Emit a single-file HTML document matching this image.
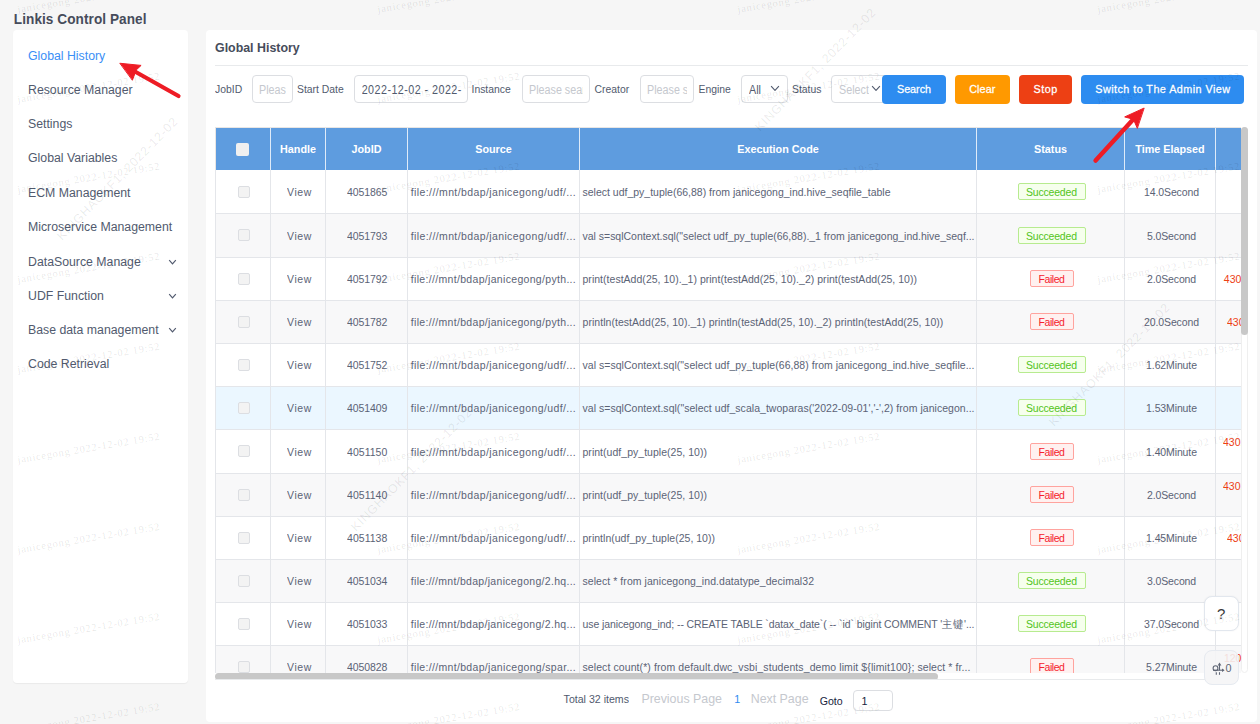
<!DOCTYPE html>
<html><head><meta charset="utf-8"><title>Linkis Control Panel</title>
<style>
html,body{margin:0;padding:0;}
body{width:1260px;height:724px;overflow:hidden;position:relative;background:#f6f6f6;font-family:"Liberation Sans",sans-serif;}
.r{position:absolute;}
.t{position:absolute;line-height:1;white-space:nowrap;transform-origin:0 0.8465em;}
</style></head><body>
<div class="r" style="left:13px;top:30px;width:175px;height:653px;background:#fff;border-radius:4px;box-shadow:0 1px 1px rgba(0,0,0,0.05);"></div>
<div class="t" style="left:13.80px;top:12.69px;font-size:13.6px;color:#464c5b;font-weight:700;transform:scaleY(1.04);letter-spacing:0.066px;">Linkis Control Panel</div>
<div class="t" style="left:28.00px;top:50.29px;font-size:12.3px;color:#3a8ef6;font-weight:400;transform:scaleY(1.08);">Global History</div>
<div class="t" style="left:28.00px;top:84.19px;font-size:12.3px;color:#515a6e;font-weight:400;transform:scaleY(1.08);">Resource Manager</div>
<div class="t" style="left:28.00px;top:118.19px;font-size:12.3px;color:#515a6e;font-weight:400;transform:scaleY(1.08);">Settings</div>
<div class="t" style="left:28.00px;top:152.39px;font-size:12.3px;color:#515a6e;font-weight:400;transform:scaleY(1.08);">Global Variables</div>
<div class="t" style="left:28.00px;top:186.99px;font-size:12.3px;color:#515a6e;font-weight:400;transform:scaleY(1.08);">ECM Management</div>
<div class="t" style="left:28.00px;top:221.39px;font-size:12.3px;color:#515a6e;font-weight:400;transform:scaleY(1.08);">Microservice Management</div>
<div class="t" style="left:28.00px;top:255.69px;font-size:12.3px;color:#515a6e;font-weight:400;transform:scaleY(1.08);">DataSource Manage</div>
<svg class="r" style="left:168.0px;top:258.6px" width="9" height="6" viewBox="0 0 9 6"><path d="M1.2 1.2 L4.5 4.8 L7.8 1.2" fill="none" stroke="#515a6e" stroke-width="1.2"/></svg>
<div class="t" style="left:28.00px;top:289.69px;font-size:12.3px;color:#515a6e;font-weight:400;transform:scaleY(1.08);">UDF Function</div>
<svg class="r" style="left:168.0px;top:292.6px" width="9" height="6" viewBox="0 0 9 6"><path d="M1.2 1.2 L4.5 4.8 L7.8 1.2" fill="none" stroke="#515a6e" stroke-width="1.2"/></svg>
<div class="t" style="left:28.00px;top:323.69px;font-size:12.3px;color:#515a6e;font-weight:400;transform:scaleY(1.08);">Base data management</div>
<svg class="r" style="left:168.0px;top:326.6px" width="9" height="6" viewBox="0 0 9 6"><path d="M1.2 1.2 L4.5 4.8 L7.8 1.2" fill="none" stroke="#515a6e" stroke-width="1.2"/></svg>
<div class="t" style="left:28.00px;top:358.49px;font-size:12.3px;color:#515a6e;font-weight:400;transform:scaleY(1.08);">Code Retrieval</div>
<div class="r" style="left:206px;top:30px;width:1051px;height:692px;background:#fff;border-radius:4px;"></div>
<div class="t" style="left:215.00px;top:42.30px;font-size:12.4px;color:#464c5b;font-weight:700;transform:scaleY(1.08);">Global History</div>
<div class="r" style="left:215px;top:65px;width:1033px;height:1px;background:#e8eaec;"></div>
<div class="t" style="left:215.00px;top:84.70px;font-size:10.4px;color:#515a6e;font-weight:400;transform:scaleY(1.08);">JobID</div>
<div class="r" style="left:252px;top:75px;width:41px;height:28px;border:1px solid #dcdee2;border-radius:4px;box-sizing:border-box;background:#fff;"></div>
<div class="t" style="left:259.00px;top:85.10px;font-size:10.75px;color:#c5c8ce;font-weight:400;transform:scaleY(1.12);width:27px;overflow:hidden;white-space:nowrap;">Please search</div>
<div class="t" style="left:297.00px;top:84.70px;font-size:10.4px;color:#515a6e;font-weight:400;transform:scaleY(1.08);">Start Date</div>
<div class="r" style="left:354px;top:75px;width:114px;height:28px;border:1px solid #dcdee2;border-radius:4px;box-sizing:border-box;background:#fff;"></div>
<div class="t" style="left:361.70px;top:85.10px;font-size:10.75px;color:#515a6e;font-weight:400;transform:scaleY(1.12);width:100px;overflow:hidden;letter-spacing:0.45px;">2022-12-02 - 2022-12-02</div>
<div class="t" style="left:471.50px;top:84.70px;font-size:10.4px;color:#515a6e;font-weight:400;transform:scaleY(1.08);">Instance</div>
<div class="r" style="left:522px;top:75px;width:68px;height:28px;border:1px solid #dcdee2;border-radius:4px;box-sizing:border-box;background:#fff;"></div>
<div class="t" style="left:529.00px;top:85.10px;font-size:10.75px;color:#c5c8ce;font-weight:400;transform:scaleY(1.12);width:54px;overflow:hidden;white-space:nowrap;">Please search</div>
<div class="t" style="left:594.50px;top:84.70px;font-size:10.4px;color:#515a6e;font-weight:400;transform:scaleY(1.08);">Creator</div>
<div class="r" style="left:640px;top:75px;width:54px;height:28px;border:1px solid #dcdee2;border-radius:4px;box-sizing:border-box;background:#fff;"></div>
<div class="t" style="left:647.00px;top:85.10px;font-size:10.75px;color:#c5c8ce;font-weight:400;transform:scaleY(1.12);width:40px;overflow:hidden;white-space:nowrap;">Please search</div>
<div class="t" style="left:698.50px;top:84.70px;font-size:10.4px;color:#515a6e;font-weight:400;transform:scaleY(1.08);">Engine</div>
<div class="r" style="left:741px;top:75px;width:47px;height:28px;border:1px solid #dcdee2;border-radius:4px;box-sizing:border-box;background:#fff;"></div>
<div class="t" style="left:749.00px;top:85.10px;font-size:10.75px;color:#515a6e;font-weight:400;transform:scaleY(1.12);width:32px;overflow:hidden;white-space:nowrap;">All</div>
<svg class="r" style="left:770.0px;top:84.8px" width="10" height="6.5" viewBox="0 0 10 6.5"><path d="M1.1 1.1 L5.0 5.4 L8.9 1.1" fill="none" stroke="#515a6e" stroke-width="1.1"/></svg>
<div class="t" style="left:792.00px;top:84.70px;font-size:10.4px;color:#515a6e;font-weight:400;transform:scaleY(1.08);">Status</div>
<div class="r" style="left:831px;top:75px;width:60px;height:28px;border:1px solid #dcdee2;border-radius:4px;box-sizing:border-box;background:#fff;"></div>
<div class="t" style="left:839.00px;top:85.10px;font-size:10.75px;color:#c5c8ce;font-weight:400;transform:scaleY(1.12);width:45px;overflow:hidden;white-space:nowrap;">Select</div>
<svg class="r" style="left:871.0px;top:84.8px" width="10" height="6.5" viewBox="0 0 10 6.5"><path d="M1.1 1.1 L5.0 5.4 L8.9 1.1" fill="none" stroke="#515a6e" stroke-width="1.1"/></svg>
<div class="r" style="left:882px;top:75px;width:64px;height:28.5px;background:#2d8cf0;border-radius:4px;"></div>
<div class="t" style="left:897.00px;top:84.36px;font-size:10.8px;color:#fff;font-weight:400;transform:scaleY(1.08);-webkit-text-stroke:0.25px #fff;letter-spacing:-0.044px;">Search</div>
<div class="r" style="left:955px;top:75px;width:55px;height:28.5px;background:#ff9900;border-radius:4px;"></div>
<div class="t" style="left:969.20px;top:84.36px;font-size:10.8px;color:#fff;font-weight:400;transform:scaleY(1.08);-webkit-text-stroke:0.25px #fff;letter-spacing:0.097px;">Clear</div>
<div class="r" style="left:1019px;top:75px;width:53px;height:28.5px;background:#ed4014;border-radius:4px;"></div>
<div class="t" style="left:1033.60px;top:84.36px;font-size:10.8px;color:#fff;font-weight:400;transform:scaleY(1.08);-webkit-text-stroke:0.25px #fff;letter-spacing:0.460px;">Stop</div>
<div class="r" style="left:1081px;top:75px;width:163px;height:28.5px;background:#2d8cf0;border-radius:4px;"></div>
<div class="t" style="left:1095.30px;top:84.36px;font-size:10.8px;color:#fff;font-weight:400;transform:scaleY(1.08);-webkit-text-stroke:0.25px #fff;letter-spacing:0.446px;">Switch to The Admin View</div>
<div class="r" style="left:215px;top:127px;width:1026px;height:546px;overflow:hidden;">
<div class="r" style="left:0px;top:0px;width:1100px;height:1px;background:#e9e6e4;"></div>
<div class="r" style="left:1px;top:1px;width:1100px;height:42px;background:#5e9cdf;"></div>
<div class="r" style="left:0px;top:1px;width:1px;height:42px;background:#e9e6e4;"></div>
<div class="r" style="left:55px;top:1px;width:1px;height:42px;background:rgba(255,255,255,0.8);"></div>
<div class="r" style="left:110px;top:1px;width:1px;height:42px;background:rgba(255,255,255,0.8);"></div>
<div class="r" style="left:192px;top:1px;width:1px;height:42px;background:rgba(255,255,255,0.8);"></div>
<div class="r" style="left:364px;top:1px;width:1px;height:42px;background:rgba(255,255,255,0.8);"></div>
<div class="r" style="left:761px;top:1px;width:1px;height:42px;background:rgba(255,255,255,0.8);"></div>
<div class="r" style="left:909px;top:1px;width:1px;height:42px;background:rgba(255,255,255,0.8);"></div>
<div class="r" style="left:1000px;top:1px;width:1px;height:42px;background:rgba(255,255,255,0.8);"></div>
<div class="t" style="left:-217.00px;width:600px;text-align:center;top:16.96px;font-size:10.8px;color:#fff;font-weight:700;transform:scaleY(1.08);">Handle</div>
<div class="t" style="left:-148.50px;width:600px;text-align:center;top:16.96px;font-size:10.8px;color:#fff;font-weight:700;transform:scaleY(1.08);">JobID</div>
<div class="t" style="left:-21.50px;width:600px;text-align:center;top:16.96px;font-size:10.8px;color:#fff;font-weight:700;transform:scaleY(1.08);">Source</div>
<div class="t" style="left:263.00px;width:600px;text-align:center;top:16.96px;font-size:10.8px;color:#fff;font-weight:700;transform:scaleY(1.08);">Execution Code</div>
<div class="t" style="left:535.50px;width:600px;text-align:center;top:16.96px;font-size:10.8px;color:#fff;font-weight:700;transform:scaleY(1.08);">Status</div>
<div class="t" style="left:655.00px;width:600px;text-align:center;top:16.96px;font-size:10.8px;color:#fff;font-weight:700;transform:scaleY(1.08);">Time Elapsed</div>
<div class="r" style="left:21px;top:16px;width:13px;height:13px;background:#f0f0f0;border-radius:2px;"></div>
<div class="r" style="left:0px;top:43px;width:1100px;height:43px;background:#fff;"></div>
<div class="r" style="left:0px;top:86px;width:1100px;height:44px;background:#f8f8f9;"></div>
<div class="r" style="left:0px;top:130px;width:1100px;height:43px;background:#fff;"></div>
<div class="r" style="left:0px;top:173px;width:1100px;height:43px;background:#f8f8f9;"></div>
<div class="r" style="left:0px;top:216px;width:1100px;height:43px;background:#fff;"></div>
<div class="r" style="left:0px;top:259px;width:1100px;height:43px;background:#ebf7ff;"></div>
<div class="r" style="left:0px;top:302px;width:1100px;height:44px;background:#fff;"></div>
<div class="r" style="left:0px;top:346px;width:1100px;height:43px;background:#f8f8f9;"></div>
<div class="r" style="left:0px;top:389px;width:1100px;height:43px;background:#fff;"></div>
<div class="r" style="left:0px;top:432px;width:1100px;height:43px;background:#f8f8f9;"></div>
<div class="r" style="left:0px;top:475px;width:1100px;height:43px;background:#fff;"></div>
<div class="r" style="left:0px;top:518px;width:1100px;height:43px;background:#f8f8f9;"></div>
<div class="r" style="left:0px;top:86px;width:1100px;height:1px;background:#e4e6ea;"></div>
<div class="r" style="left:0px;top:130px;width:1100px;height:1px;background:#e4e6ea;"></div>
<div class="r" style="left:0px;top:173px;width:1100px;height:1px;background:#e4e6ea;"></div>
<div class="r" style="left:0px;top:216px;width:1100px;height:1px;background:#e4e6ea;"></div>
<div class="r" style="left:0px;top:259px;width:1100px;height:1px;background:#e4e6ea;"></div>
<div class="r" style="left:0px;top:302px;width:1100px;height:1px;background:#e4e6ea;"></div>
<div class="r" style="left:0px;top:346px;width:1100px;height:1px;background:#e4e6ea;"></div>
<div class="r" style="left:0px;top:389px;width:1100px;height:1px;background:#e4e6ea;"></div>
<div class="r" style="left:0px;top:432px;width:1100px;height:1px;background:#e4e6ea;"></div>
<div class="r" style="left:0px;top:475px;width:1100px;height:1px;background:#e4e6ea;"></div>
<div class="r" style="left:0px;top:518px;width:1100px;height:1px;background:#e4e6ea;"></div>
<div class="r" style="left:0px;top:561px;width:1100px;height:1px;background:#e4e6ea;"></div>
<div class="r" style="left:23px;top:59px;width:12px;height:12px;border:1px solid #dcdee2;background:#f3f3f3;border-radius:2px;box-sizing:border-box;"></div>
<div class="t" style="left:72.00px;top:60.21px;font-size:10.5px;color:#5b6376;font-weight:400;transform:scaleY(1.08);letter-spacing:0.574px;">View</div>
<div class="t" style="left:132.10px;top:60.21px;font-size:10.5px;color:#5b6376;font-weight:400;transform:scaleY(1.08);letter-spacing:-0.115px;">4051865</div>
<div class="t" style="left:195.80px;top:60.21px;font-size:10.5px;color:#5b6376;font-weight:400;transform:scaleY(1.08);letter-spacing:0.389px;">file:///mnt/bdap/janicegong/udf/...</div>
<div class="t" style="left:367.50px;top:60.21px;font-size:10.5px;color:#5b6376;font-weight:400;transform:scaleY(1.08);letter-spacing:-0.003px;">select udf_py_tuple(66,88) from janicegong_ind.hive_seqfile_table</div>
<div class="r" style="left:803px;top:56px;width:68px;height:17px;border:1px solid #b7eb8f;background:#f6ffed;border-radius:2px;box-sizing:border-box;"></div>
<div class="t" style="left:811.00px;top:60.21px;font-size:10.5px;color:#52c41a;font-weight:400;transform:scaleY(1.08);letter-spacing:-0.193px;">Succeeded</div>
<div class="t" style="left:656.50px;width:600px;text-align:center;top:60.21px;font-size:10.5px;color:#5b6376;font-weight:400;transform:scaleY(1.08);letter-spacing:-0.12px;">14.0Second</div>
<div class="r" style="left:23px;top:102px;width:12px;height:12px;border:1px solid #dcdee2;background:#f3f3f3;border-radius:2px;box-sizing:border-box;"></div>
<div class="t" style="left:72.00px;top:103.71px;font-size:10.5px;color:#5b6376;font-weight:400;transform:scaleY(1.08);letter-spacing:0.574px;">View</div>
<div class="t" style="left:132.10px;top:103.71px;font-size:10.5px;color:#5b6376;font-weight:400;transform:scaleY(1.08);letter-spacing:-0.115px;">4051793</div>
<div class="t" style="left:195.80px;top:103.71px;font-size:10.5px;color:#5b6376;font-weight:400;transform:scaleY(1.08);letter-spacing:0.389px;">file:///mnt/bdap/janicegong/udf/...</div>
<div class="t" style="left:367.50px;top:103.71px;font-size:10.5px;color:#5b6376;font-weight:400;transform:scaleY(1.08);letter-spacing:-0.016px;">val s=sqlContext.sql(&quot;select udf_py_tuple(66,88)._1 from janicegong_ind.hive_seqf...</div>
<div class="r" style="left:803px;top:100px;width:68px;height:17px;border:1px solid #b7eb8f;background:#f6ffed;border-radius:2px;box-sizing:border-box;"></div>
<div class="t" style="left:811.00px;top:103.71px;font-size:10.5px;color:#52c41a;font-weight:400;transform:scaleY(1.08);letter-spacing:-0.193px;">Succeeded</div>
<div class="t" style="left:656.50px;width:600px;text-align:center;top:103.71px;font-size:10.5px;color:#5b6376;font-weight:400;transform:scaleY(1.08);letter-spacing:-0.12px;">5.0Second</div>
<div class="r" style="left:23px;top:146px;width:12px;height:12px;border:1px solid #dcdee2;background:#f3f3f3;border-radius:2px;box-sizing:border-box;"></div>
<div class="t" style="left:72.00px;top:147.21px;font-size:10.5px;color:#5b6376;font-weight:400;transform:scaleY(1.08);letter-spacing:0.574px;">View</div>
<div class="t" style="left:132.10px;top:147.21px;font-size:10.5px;color:#5b6376;font-weight:400;transform:scaleY(1.08);letter-spacing:-0.115px;">4051792</div>
<div class="t" style="left:195.80px;top:147.21px;font-size:10.5px;color:#5b6376;font-weight:400;transform:scaleY(1.08);letter-spacing:0.320px;">file:///mnt/bdap/janicegong/pyth...</div>
<div class="t" style="left:367.50px;top:147.21px;font-size:10.5px;color:#5b6376;font-weight:400;transform:scaleY(1.08);letter-spacing:0.025px;">print(testAdd(25, 10)._1) print(testAdd(25, 10)._2) print(testAdd(25, 10))</div>
<div class="r" style="left:815px;top:143px;width:44px;height:17px;border:1px solid #ffa39e;background:#fff1f0;border-radius:2px;box-sizing:border-box;"></div>
<div class="t" style="left:823.60px;top:147.21px;font-size:10.5px;color:#f5222d;font-weight:400;transform:scaleY(1.08);letter-spacing:-0.462px;">Failed</div>
<div class="t" style="left:656.50px;width:600px;text-align:center;top:147.21px;font-size:10.5px;color:#5b6376;font-weight:400;transform:scaleY(1.08);letter-spacing:-0.12px;">2.0Second</div>
<div class="t" style="left:1008.80px;top:146.91px;font-size:10.5px;color:#ed4014;font-weight:400;transform:scaleY(1.08);">4301</div>
<div class="r" style="left:23px;top:189px;width:12px;height:12px;border:1px solid #dcdee2;background:#f3f3f3;border-radius:2px;box-sizing:border-box;"></div>
<div class="t" style="left:72.00px;top:190.21px;font-size:10.5px;color:#5b6376;font-weight:400;transform:scaleY(1.08);letter-spacing:0.574px;">View</div>
<div class="t" style="left:132.10px;top:190.21px;font-size:10.5px;color:#5b6376;font-weight:400;transform:scaleY(1.08);letter-spacing:-0.115px;">4051782</div>
<div class="t" style="left:195.80px;top:190.21px;font-size:10.5px;color:#5b6376;font-weight:400;transform:scaleY(1.08);letter-spacing:0.320px;">file:///mnt/bdap/janicegong/pyth...</div>
<div class="t" style="left:367.50px;top:190.21px;font-size:10.5px;color:#5b6376;font-weight:400;transform:scaleY(1.08);letter-spacing:0.046px;">println(testAdd(25, 10)._1) println(testAdd(25, 10)._2) println(testAdd(25, 10))</div>
<div class="r" style="left:815px;top:186px;width:44px;height:17px;border:1px solid #ffa39e;background:#fff1f0;border-radius:2px;box-sizing:border-box;"></div>
<div class="t" style="left:823.60px;top:190.21px;font-size:10.5px;color:#f5222d;font-weight:400;transform:scaleY(1.08);letter-spacing:-0.462px;">Failed</div>
<div class="t" style="left:656.50px;width:600px;text-align:center;top:190.21px;font-size:10.5px;color:#5b6376;font-weight:400;transform:scaleY(1.08);letter-spacing:-0.12px;">20.0Second</div>
<div class="t" style="left:1012.00px;top:189.91px;font-size:10.5px;color:#ed4014;font-weight:400;transform:scaleY(1.08);">4301</div>
<div class="r" style="left:23px;top:232px;width:12px;height:12px;border:1px solid #dcdee2;background:#f3f3f3;border-radius:2px;box-sizing:border-box;"></div>
<div class="t" style="left:72.00px;top:233.21px;font-size:10.5px;color:#5b6376;font-weight:400;transform:scaleY(1.08);letter-spacing:0.574px;">View</div>
<div class="t" style="left:132.10px;top:233.21px;font-size:10.5px;color:#5b6376;font-weight:400;transform:scaleY(1.08);letter-spacing:-0.115px;">4051752</div>
<div class="t" style="left:195.80px;top:233.21px;font-size:10.5px;color:#5b6376;font-weight:400;transform:scaleY(1.08);letter-spacing:0.389px;">file:///mnt/bdap/janicegong/udf/...</div>
<div class="t" style="left:367.50px;top:233.21px;font-size:10.5px;color:#5b6376;font-weight:400;transform:scaleY(1.08);letter-spacing:0.033px;">val s=sqlContext.sql(&quot;select udf_py_tuple(66,88) from janicegong_ind.hive_seqfile...</div>
<div class="r" style="left:803px;top:229px;width:68px;height:17px;border:1px solid #b7eb8f;background:#f6ffed;border-radius:2px;box-sizing:border-box;"></div>
<div class="t" style="left:811.00px;top:233.21px;font-size:10.5px;color:#52c41a;font-weight:400;transform:scaleY(1.08);letter-spacing:-0.193px;">Succeeded</div>
<div class="t" style="left:656.50px;width:600px;text-align:center;top:233.21px;font-size:10.5px;color:#5b6376;font-weight:400;transform:scaleY(1.08);letter-spacing:-0.12px;">1.62Minute</div>
<div class="r" style="left:23px;top:275px;width:12px;height:12px;border:1px solid #dcdee2;background:#f3f3f3;border-radius:2px;box-sizing:border-box;"></div>
<div class="t" style="left:72.00px;top:276.21px;font-size:10.5px;color:#5b6376;font-weight:400;transform:scaleY(1.08);letter-spacing:0.574px;">View</div>
<div class="t" style="left:132.10px;top:276.21px;font-size:10.5px;color:#5b6376;font-weight:400;transform:scaleY(1.08);letter-spacing:-0.115px;">4051409</div>
<div class="t" style="left:195.80px;top:276.21px;font-size:10.5px;color:#5b6376;font-weight:400;transform:scaleY(1.08);letter-spacing:0.389px;">file:///mnt/bdap/janicegong/udf/...</div>
<div class="t" style="left:367.50px;top:276.21px;font-size:10.5px;color:#5b6376;font-weight:400;transform:scaleY(1.08);letter-spacing:0.035px;">val s=sqlContext.sql(&quot;select udf_scala_twoparas(&#x27;2022-09-01&#x27;,&#x27;-&#x27;,2) from janicegon...</div>
<div class="r" style="left:803px;top:272px;width:68px;height:17px;border:1px solid #b7eb8f;background:#f6ffed;border-radius:2px;box-sizing:border-box;"></div>
<div class="t" style="left:811.00px;top:276.21px;font-size:10.5px;color:#52c41a;font-weight:400;transform:scaleY(1.08);letter-spacing:-0.193px;">Succeeded</div>
<div class="t" style="left:656.50px;width:600px;text-align:center;top:276.21px;font-size:10.5px;color:#5b6376;font-weight:400;transform:scaleY(1.08);letter-spacing:-0.12px;">1.53Minute</div>
<div class="r" style="left:23px;top:318px;width:12px;height:12px;border:1px solid #dcdee2;background:#f3f3f3;border-radius:2px;box-sizing:border-box;"></div>
<div class="t" style="left:72.00px;top:319.71px;font-size:10.5px;color:#5b6376;font-weight:400;transform:scaleY(1.08);letter-spacing:0.574px;">View</div>
<div class="t" style="left:132.10px;top:319.71px;font-size:10.5px;color:#5b6376;font-weight:400;transform:scaleY(1.08);letter-spacing:0.015px;">4051150</div>
<div class="t" style="left:195.80px;top:319.71px;font-size:10.5px;color:#5b6376;font-weight:400;transform:scaleY(1.08);letter-spacing:0.389px;">file:///mnt/bdap/janicegong/udf/...</div>
<div class="t" style="left:367.50px;top:319.71px;font-size:10.5px;color:#5b6376;font-weight:400;transform:scaleY(1.08);letter-spacing:0.029px;">print(udf_py_tuple(25, 10))</div>
<div class="r" style="left:815px;top:316px;width:44px;height:17px;border:1px solid #ffa39e;background:#fff1f0;border-radius:2px;box-sizing:border-box;"></div>
<div class="t" style="left:823.60px;top:319.71px;font-size:10.5px;color:#f5222d;font-weight:400;transform:scaleY(1.08);letter-spacing:-0.462px;">Failed</div>
<div class="t" style="left:656.50px;width:600px;text-align:center;top:319.71px;font-size:10.5px;color:#5b6376;font-weight:400;transform:scaleY(1.08);letter-spacing:-0.12px;">1.40Minute</div>
<div class="t" style="left:1008.00px;top:310.21px;font-size:10.5px;color:#ed4014;font-weight:400;transform:scaleY(1.08);">4301</div>
<div class="r" style="left:23px;top:362px;width:12px;height:12px;border:1px solid #dcdee2;background:#f3f3f3;border-radius:2px;box-sizing:border-box;"></div>
<div class="t" style="left:72.00px;top:363.21px;font-size:10.5px;color:#5b6376;font-weight:400;transform:scaleY(1.08);letter-spacing:0.574px;">View</div>
<div class="t" style="left:132.10px;top:363.21px;font-size:10.5px;color:#5b6376;font-weight:400;transform:scaleY(1.08);letter-spacing:0.015px;">4051140</div>
<div class="t" style="left:195.80px;top:363.21px;font-size:10.5px;color:#5b6376;font-weight:400;transform:scaleY(1.08);letter-spacing:0.389px;">file:///mnt/bdap/janicegong/udf/...</div>
<div class="t" style="left:367.50px;top:363.21px;font-size:10.5px;color:#5b6376;font-weight:400;transform:scaleY(1.08);letter-spacing:0.029px;">print(udf_py_tuple(25, 10))</div>
<div class="r" style="left:815px;top:359px;width:44px;height:17px;border:1px solid #ffa39e;background:#fff1f0;border-radius:2px;box-sizing:border-box;"></div>
<div class="t" style="left:823.60px;top:363.21px;font-size:10.5px;color:#f5222d;font-weight:400;transform:scaleY(1.08);letter-spacing:-0.462px;">Failed</div>
<div class="t" style="left:656.50px;width:600px;text-align:center;top:363.21px;font-size:10.5px;color:#5b6376;font-weight:400;transform:scaleY(1.08);letter-spacing:-0.12px;">2.0Second</div>
<div class="t" style="left:1008.00px;top:353.71px;font-size:10.5px;color:#ed4014;font-weight:400;transform:scaleY(1.08);">4301</div>
<div class="r" style="left:23px;top:405px;width:12px;height:12px;border:1px solid #dcdee2;background:#f3f3f3;border-radius:2px;box-sizing:border-box;"></div>
<div class="t" style="left:72.00px;top:406.21px;font-size:10.5px;color:#5b6376;font-weight:400;transform:scaleY(1.08);letter-spacing:0.574px;">View</div>
<div class="t" style="left:132.10px;top:406.21px;font-size:10.5px;color:#5b6376;font-weight:400;transform:scaleY(1.08);letter-spacing:0.015px;">4051138</div>
<div class="t" style="left:195.80px;top:406.21px;font-size:10.5px;color:#5b6376;font-weight:400;transform:scaleY(1.08);letter-spacing:0.389px;">file:///mnt/bdap/janicegong/udf/...</div>
<div class="t" style="left:367.50px;top:406.21px;font-size:10.5px;color:#5b6376;font-weight:400;transform:scaleY(1.08);letter-spacing:0.021px;">println(udf_py_tuple(25, 10))</div>
<div class="r" style="left:815px;top:402px;width:44px;height:17px;border:1px solid #ffa39e;background:#fff1f0;border-radius:2px;box-sizing:border-box;"></div>
<div class="t" style="left:823.60px;top:406.21px;font-size:10.5px;color:#f5222d;font-weight:400;transform:scaleY(1.08);letter-spacing:-0.462px;">Failed</div>
<div class="t" style="left:656.50px;width:600px;text-align:center;top:406.21px;font-size:10.5px;color:#5b6376;font-weight:400;transform:scaleY(1.08);letter-spacing:-0.12px;">1.45Minute</div>
<div class="t" style="left:1012.00px;top:406.21px;font-size:10.5px;color:#ed4014;font-weight:400;transform:scaleY(1.08);">4301</div>
<div class="r" style="left:23px;top:448px;width:12px;height:12px;border:1px solid #dcdee2;background:#f3f3f3;border-radius:2px;box-sizing:border-box;"></div>
<div class="t" style="left:72.00px;top:449.21px;font-size:10.5px;color:#5b6376;font-weight:400;transform:scaleY(1.08);letter-spacing:0.574px;">View</div>
<div class="t" style="left:132.10px;top:449.21px;font-size:10.5px;color:#5b6376;font-weight:400;transform:scaleY(1.08);letter-spacing:-0.115px;">4051034</div>
<div class="t" style="left:195.80px;top:449.21px;font-size:10.5px;color:#5b6376;font-weight:400;transform:scaleY(1.08);letter-spacing:0.303px;">file:///mnt/bdap/janicegong/2.hq...</div>
<div class="t" style="left:367.50px;top:449.21px;font-size:10.5px;color:#5b6376;font-weight:400;transform:scaleY(1.08);letter-spacing:0.058px;">select * from janicegong_ind.datatype_decimal32</div>
<div class="r" style="left:803px;top:445px;width:68px;height:17px;border:1px solid #b7eb8f;background:#f6ffed;border-radius:2px;box-sizing:border-box;"></div>
<div class="t" style="left:811.00px;top:449.21px;font-size:10.5px;color:#52c41a;font-weight:400;transform:scaleY(1.08);letter-spacing:-0.193px;">Succeeded</div>
<div class="t" style="left:656.50px;width:600px;text-align:center;top:449.21px;font-size:10.5px;color:#5b6376;font-weight:400;transform:scaleY(1.08);letter-spacing:-0.12px;">3.0Second</div>
<div class="r" style="left:23px;top:491px;width:12px;height:12px;border:1px solid #dcdee2;background:#f3f3f3;border-radius:2px;box-sizing:border-box;"></div>
<div class="t" style="left:72.00px;top:492.21px;font-size:10.5px;color:#5b6376;font-weight:400;transform:scaleY(1.08);letter-spacing:0.574px;">View</div>
<div class="t" style="left:132.10px;top:492.21px;font-size:10.5px;color:#5b6376;font-weight:400;transform:scaleY(1.08);letter-spacing:-0.115px;">4051033</div>
<div class="t" style="left:195.80px;top:492.21px;font-size:10.5px;color:#5b6376;font-weight:400;transform:scaleY(1.08);letter-spacing:0.303px;">file:///mnt/bdap/janicegong/2.hq...</div>
<div class="t" style="left:367.50px;top:492.21px;font-size:10.5px;color:#5b6376;font-weight:400;transform:scaleY(1.08);letter-spacing:-0.092px;">use janicegong_ind; -- CREATE TABLE `datax_date`( -- `id` bigint COMMENT &#x27;主键&#x27;...</div>
<div class="r" style="left:803px;top:488px;width:68px;height:17px;border:1px solid #b7eb8f;background:#f6ffed;border-radius:2px;box-sizing:border-box;"></div>
<div class="t" style="left:811.00px;top:492.21px;font-size:10.5px;color:#52c41a;font-weight:400;transform:scaleY(1.08);letter-spacing:-0.193px;">Succeeded</div>
<div class="t" style="left:656.50px;width:600px;text-align:center;top:492.21px;font-size:10.5px;color:#5b6376;font-weight:400;transform:scaleY(1.08);letter-spacing:-0.12px;">37.0Second</div>
<div class="r" style="left:23px;top:534px;width:12px;height:12px;border:1px solid #dcdee2;background:#f3f3f3;border-radius:2px;box-sizing:border-box;"></div>
<div class="t" style="left:72.00px;top:535.21px;font-size:10.5px;color:#5b6376;font-weight:400;transform:scaleY(1.08);letter-spacing:0.574px;">View</div>
<div class="t" style="left:132.10px;top:535.21px;font-size:10.5px;color:#5b6376;font-weight:400;transform:scaleY(1.08);letter-spacing:-0.115px;">4050828</div>
<div class="t" style="left:195.80px;top:535.21px;font-size:10.5px;color:#5b6376;font-weight:400;transform:scaleY(1.08);letter-spacing:0.320px;">file:///mnt/bdap/janicegong/spar...</div>
<div class="t" style="left:367.50px;top:535.21px;font-size:10.5px;color:#5b6376;font-weight:400;transform:scaleY(1.08);letter-spacing:0.089px;">select count(*) from default.dwc_vsbi_students_demo limit ${limit100}; select * fr...</div>
<div class="r" style="left:815px;top:531px;width:44px;height:17px;border:1px solid #ffa39e;background:#fff1f0;border-radius:2px;box-sizing:border-box;"></div>
<div class="t" style="left:823.60px;top:535.21px;font-size:10.5px;color:#f5222d;font-weight:400;transform:scaleY(1.08);letter-spacing:-0.462px;">Failed</div>
<div class="t" style="left:656.50px;width:600px;text-align:center;top:535.21px;font-size:10.5px;color:#5b6376;font-weight:400;transform:scaleY(1.08);letter-spacing:-0.12px;">5.27Minute</div>
<div class="r" style="left:0px;top:43px;width:1px;height:520px;background:#e4e6ea;"></div>
<div class="r" style="left:55px;top:43px;width:1px;height:520px;background:#e4e6ea;"></div>
<div class="r" style="left:110px;top:43px;width:1px;height:520px;background:#e4e6ea;"></div>
<div class="r" style="left:192px;top:43px;width:1px;height:520px;background:#e4e6ea;"></div>
<div class="r" style="left:364px;top:43px;width:1px;height:520px;background:#e4e6ea;"></div>
<div class="r" style="left:761px;top:43px;width:1px;height:520px;background:#e4e6ea;"></div>
<div class="r" style="left:909px;top:43px;width:1px;height:520px;background:#e4e6ea;"></div>
<div class="r" style="left:1000px;top:43px;width:1px;height:520px;background:#e4e6ea;"></div>
</div>
<div class="r" style="left:215px;top:673px;width:1033px;height:7px;background:#fff;"></div>
<div class="r" style="left:215px;top:673px;width:723px;height:7px;background:#c8c8c8;border-radius:4px;"></div>
<div class="r" style="left:215px;top:679px;width:990px;height:1px;background:#e8eaec;"></div>
<div class="r" style="left:1241px;top:127px;width:7px;height:546px;background:#fff;border:1px solid #efefef;border-radius:4px;box-sizing:border-box;"></div>
<div class="r" style="left:1241px;top:127px;width:7px;height:208px;background:#c8c8c8;border-radius:4px;"></div>
<div class="t" style="left:563.60px;top:694.33px;font-size:10.6px;color:#515a6e;font-weight:400;transform:scaleY(1.08);">Total 32 items</div>
<div class="t" style="left:641.40px;top:692.50px;font-size:12.4px;color:#c5c8ce;font-weight:400;transform:scaleY(1.08);">Previous Page</div>
<div class="t" style="left:734.30px;top:694.46px;font-size:10.8px;color:#2d8cf0;font-weight:400;transform:scaleY(1.08);">1</div>
<div class="t" style="left:750.70px;top:692.50px;font-size:12.4px;color:#c5c8ce;font-weight:400;transform:scaleY(1.08);">Next Page</div>
<div class="t" style="left:819.70px;top:696.03px;font-size:10.6px;color:#17233d;font-weight:400;transform:scaleY(1.08);">Goto</div>
<div class="r" style="left:853px;top:690px;width:40px;height:21px;border:1px solid #dcdee2;border-radius:4px;box-sizing:border-box;background:#fff;"></div>
<div class="t" style="left:861.40px;top:695.86px;font-size:10.8px;color:#17233d;font-weight:400;transform:scaleY(1.08);">1</div>
<div class="r" style="left:1203.5px;top:596.3px;width:35.3px;height:35px;background:#fff;border-radius:8px;border:1px solid #e2e7ee;box-sizing:border-box;box-shadow:0 0 2px rgba(0,0,0,0.06);"></div>
<div class="t" style="left:921.20px;width:600px;text-align:center;top:605.90px;font-size:15px;color:#3a3a3a;font-weight:400;">?</div>
<div class="t" style="left:1223.90px;top:653.11px;font-size:10.5px;color:#ed4014;font-weight:400;">120</div>
<div class="r" style="left:1203.5px;top:650.3px;width:35.3px;height:35px;background:rgba(245,245,246,0.88);border-radius:8px;border:1px solid #e6eaf0;box-sizing:border-box;"></div>
<svg class="r" style="left:1208px;top:660px" width="30" height="18" viewBox="0 0 30 18">
<g fill="none" stroke="#5f6675" stroke-width="1.1">
<circle cx="7.5" cy="8.2" r="2.4"/>
<line x1="5" y1="10.2" x2="15.5" y2="10.2"/>
<line x1="11.5" y1="4.5" x2="11.5" y2="10.2"/>
<line x1="8.3" y1="12.2" x2="8.3" y2="14.8"/>
<line x1="11.5" y1="12.2" x2="11.5" y2="14.8"/>
</g>
<path d="M11.5 2.6 L13.4 5.4 L9.6 5.4 Z" fill="#5f6675"/>
<path d="M16.6 10.2 L14 8.5 L14 11.9 Z" fill="#5f6675"/>
</svg>
<div class="t" style="left:1225.60px;top:662.86px;font-size:10.8px;color:#5f6675;font-weight:400;transform:scaleY(1.05);">0</div>
<svg class="r" style="left:0;top:0" width="1260" height="724" viewBox="0 0 1260 724">
<g fill="#ee1c25" stroke="#ee1c25" stroke-linecap="round" stroke-linejoin="round">
<line x1="178.5" y1="96" x2="134" y2="71" stroke-width="4.2"/>
<path d="M120.2 63.3 L141.1 65.4 L136.3 69.9 L132.5 79.9 Z" stroke-width="1"/>
<line x1="1095.6" y1="160.5" x2="1134" y2="118.5" stroke-width="4.5"/>
<path d="M1143.8 108.2 L1124.7 116.9 L1133.4 119.3 L1137.2 128 Z" stroke-width="1"/>
</g></svg>
<svg class="r" style="left:0;top:0;pointer-events:none" width="1260" height="724" viewBox="0 0 1260 724">
<g font-family="Liberation Serif" font-size="10.4" fill="rgba(0,0,0,0.10)" letter-spacing="0.8">
<text transform="translate(18,-77.4) rotate(-9.4)">janicegong 2022-12-02 19:52</text>
<text transform="translate(18,12.7) rotate(-9.4)">janicegong 2022-12-02 19:52</text>
<text transform="translate(18,102.8) rotate(-9.4)">janicegong 2022-12-02 19:52</text>
<text transform="translate(18,192.9) rotate(-9.4)">janicegong 2022-12-02 19:52</text>
<text transform="translate(18,283.0) rotate(-9.4)">janicegong 2022-12-02 19:52</text>
<text transform="translate(18,373.1) rotate(-9.4)">janicegong 2022-12-02 19:52</text>
<text transform="translate(18,463.2) rotate(-9.4)">janicegong 2022-12-02 19:52</text>
<text transform="translate(18,553.3) rotate(-9.4)">janicegong 2022-12-02 19:52</text>
<text transform="translate(18,643.4) rotate(-9.4)">janicegong 2022-12-02 19:52</text>
<text transform="translate(18,733.5) rotate(-9.4)">janicegong 2022-12-02 19:52</text>
<text transform="translate(18,823.6) rotate(-9.4)">janicegong 2022-12-02 19:52</text>
<text transform="translate(378,-77.4) rotate(-9.4)">janicegong 2022-12-02 19:52</text>
<text transform="translate(378,12.7) rotate(-9.4)">janicegong 2022-12-02 19:52</text>
<text transform="translate(378,102.8) rotate(-9.4)">janicegong 2022-12-02 19:52</text>
<text transform="translate(378,192.9) rotate(-9.4)">janicegong 2022-12-02 19:52</text>
<text transform="translate(378,283.0) rotate(-9.4)">janicegong 2022-12-02 19:52</text>
<text transform="translate(378,373.1) rotate(-9.4)">janicegong 2022-12-02 19:52</text>
<text transform="translate(378,463.2) rotate(-9.4)">janicegong 2022-12-02 19:52</text>
<text transform="translate(378,553.3) rotate(-9.4)">janicegong 2022-12-02 19:52</text>
<text transform="translate(378,643.4) rotate(-9.4)">janicegong 2022-12-02 19:52</text>
<text transform="translate(378,733.5) rotate(-9.4)">janicegong 2022-12-02 19:52</text>
<text transform="translate(378,823.6) rotate(-9.4)">janicegong 2022-12-02 19:52</text>
<text transform="translate(738,-77.4) rotate(-9.4)">janicegong 2022-12-02 19:52</text>
<text transform="translate(738,12.7) rotate(-9.4)">janicegong 2022-12-02 19:52</text>
<text transform="translate(738,102.8) rotate(-9.4)">janicegong 2022-12-02 19:52</text>
<text transform="translate(738,192.9) rotate(-9.4)">janicegong 2022-12-02 19:52</text>
<text transform="translate(738,283.0) rotate(-9.4)">janicegong 2022-12-02 19:52</text>
<text transform="translate(738,373.1) rotate(-9.4)">janicegong 2022-12-02 19:52</text>
<text transform="translate(738,463.2) rotate(-9.4)">janicegong 2022-12-02 19:52</text>
<text transform="translate(738,553.3) rotate(-9.4)">janicegong 2022-12-02 19:52</text>
<text transform="translate(738,643.4) rotate(-9.4)">janicegong 2022-12-02 19:52</text>
<text transform="translate(738,733.5) rotate(-9.4)">janicegong 2022-12-02 19:52</text>
<text transform="translate(738,823.6) rotate(-9.4)">janicegong 2022-12-02 19:52</text>
<text transform="translate(1098,-77.4) rotate(-9.4)">janicegong 2022-12-02 19:52</text>
<text transform="translate(1098,12.7) rotate(-9.4)">janicegong 2022-12-02 19:52</text>
<text transform="translate(1098,102.8) rotate(-9.4)">janicegong 2022-12-02 19:52</text>
<text transform="translate(1098,192.9) rotate(-9.4)">janicegong 2022-12-02 19:52</text>
<text transform="translate(1098,283.0) rotate(-9.4)">janicegong 2022-12-02 19:52</text>
<text transform="translate(1098,373.1) rotate(-9.4)">janicegong 2022-12-02 19:52</text>
<text transform="translate(1098,463.2) rotate(-9.4)">janicegong 2022-12-02 19:52</text>
<text transform="translate(1098,553.3) rotate(-9.4)">janicegong 2022-12-02 19:52</text>
<text transform="translate(1098,643.4) rotate(-9.4)">janicegong 2022-12-02 19:52</text>
<text transform="translate(1098,733.5) rotate(-9.4)">janicegong 2022-12-02 19:52</text>
<text transform="translate(1098,823.6) rotate(-9.4)">janicegong 2022-12-02 19:52</text>
</g>
<g font-family="Liberation Sans" font-size="12.3" fill="rgba(0,0,0,0.09)" letter-spacing="0.8">
<text transform="translate(62,241) rotate(-45.5)">KINGHAOKF1, 2022-12-02</text>
<text transform="translate(356,532) rotate(-45.5)">KINGHAOKF1, 2022-12-02</text>
<text transform="translate(760,132) rotate(-45.5)">KINGHAOKF1, 2022-12-02</text>
<text transform="translate(1054,427) rotate(-45.5)">KINGHAOKF1, 2022-12-02</text>
</g></svg>
</body></html>
